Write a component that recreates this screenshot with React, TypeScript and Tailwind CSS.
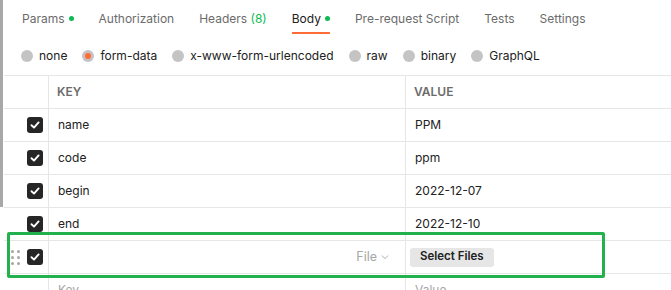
import React from "react";

const tabs = [
  { label: "Params", dot: true },
  { label: "Authorization" },
  { label: "Headers", count: "(8)" },
  { label: "Body", dot: true, active: true },
  { label: "Pre-request Script" },
  { label: "Tests" },
  { label: "Settings" },
];

const bodyTypes = ["none", "form-data", "x-www-form-urlencoded", "raw", "binary", "GraphQL"];

const rows = [
  { key: "name", value: "PPM" },
  { key: "code", value: "ppm" },
  { key: "begin", value: "2022-12-07" },
  { key: "end", value: "2022-12-10" },
];

function Check() {
  return (
    <div className="w-4 h-4 rounded-[3px] bg-[#262626] flex items-center justify-center">
      <svg width="10" height="10" viewBox="0 0 10 10">
        <path d="M1.5 5.2 L4 7.6 L8.6 2.4" fill="none" stroke="white" strokeWidth="1.9" strokeLinecap="round" strokeLinejoin="round" />
      </svg>
    </div>
  );
}

function Radio({ selected }: { selected?: boolean }) {
  return (
    <div className="w-3 h-3 rounded-full bg-[#c4c4c4] flex items-center justify-center">
      {selected && <div className="w-[6px] h-[6px] rounded-full bg-[#ff6c37]" />}
    </div>
  );
}

export default function App() {
  return (
    <div
      className="relative w-[671px] h-[290px] bg-white overflow-hidden flex text-[12px] text-[#212121]"
      style={{ fontFamily: "Inter, 'Noto Sans', sans-serif" }}
    >
      {/* scrollbar of the left pane */}
      <div className="w-[3px] shrink-0">
        <div className="h-[207px] bg-[#a8a8a8]" />
      </div>

      <div className="flex-1 ml-[1px] flex flex-col">
        {/* tabs */}
        <div className="shrink-0 flex gap-[25px] pl-[18px] text-[12px]">
          {tabs.map((t) => (
            <div
              key={t.label}
              className={
                "h-[34px] pt-[5px] flex items-center gap-[4px] border-b-2 " +
                (t.active ? "border-[#ff6c37] text-[#212121]" : "border-transparent text-[#6b6b6b]")
              }
            >
              <span>
                {t.label}
                {t.count && <span className="text-[#0cbb52]"> {t.count}</span>}
              </span>
              {t.dot && <span className="w-[5px] h-[5px] rounded-full bg-[#0cbb52]" />}
            </div>
          ))}
        </div>

        {/* body types */}
        <div className="shrink-0 h-[41px] pt-[2px] flex items-center gap-[15px] pl-[17px] text-[12px]">
          {bodyTypes.map((b) => (
            <div key={b} className="flex items-center gap-[6px]">
              <Radio selected={b === "form-data"} />
              <span>{b}</span>
            </div>
          ))}
        </div>

        {/* table */}
        <div className="shrink-0 flex flex-col">
          <div className="grid grid-cols-[45px_357px_1fr] h-[33px] border-t border-[#e6e6e6]">
            <div className="border-r border-[#e6e6e6]" />
            <div className="border-r border-[#e6e6e6] pl-2 flex items-center text-[12px] font-semibold text-[#6b6b6b]">KEY</div>
            <div className="pl-2 flex items-center text-[12px] font-semibold text-[#6b6b6b]">VALUE</div>
          </div>

          {rows.map((r) => (
            <div key={r.key} className="grid grid-cols-[45px_357px_1fr] h-[33px] border-t border-[#e6e6e6]">
              <div className="border-r border-[#e6e6e6] flex items-center justify-end pr-[5px]">
                <Check />
              </div>
              <div className="border-r border-[#e6e6e6] pl-[9px] flex items-center">{r.key}</div>
              <div className="pl-[9px] flex items-center">{r.value}</div>
            </div>
          ))}

          <div className="grid grid-cols-[45px_357px_1fr] h-[33px] border-t border-[#e6e6e6]">
            <div className="border-r border-[#e6e6e6] flex items-center justify-between pl-[7px] pr-[5px]">
              <div className="grid grid-cols-2 gap-x-[3px] gap-y-[3px]">
                {[0, 1, 2, 3, 4, 5].map((i) => (
                  <span key={i} className="w-[3px] h-[3px] rounded-full bg-[#a6a6a6]" />
                ))}
              </div>
              <Check />
            </div>
            <div className="border-r border-[#e6e6e6] flex items-center justify-end pr-[16px] text-[#a6a6a6] gap-[4px] text-[12.5px]">
              <span>File</span>
              <svg width="8" height="8" viewBox="0 0 8 8">
                <path d="M0.8 2.5 L4 5.6 L7.2 2.5" fill="none" stroke="#a6a6a6" strokeWidth="0.9" />
              </svg>
            </div>
            <div className="pl-1 flex items-center">
              <button className="h-[19px] px-[10px] rounded-[3px] bg-[#e6e6e6] text-[11.5px] font-semibold text-[#212121]">
                Select Files
              </button>
            </div>
          </div>

          <div className="grid grid-cols-[45px_357px_1fr] h-[33px] border-t border-[#e6e6e6]">
            <div className="border-r border-[#e6e6e6]" />
            <div className="border-r border-[#e6e6e6] pl-[9px] flex items-center text-[#a6a6a6]">Key</div>
            <div className="pl-[9px] flex items-center text-[#a6a6a6]">Value</div>
          </div>
        </div>
      </div>

      {/* annotation box */}
      <div className="absolute left-[7px] top-[232px] w-[598px] h-[46px] border-[3px] border-[#22b14c] rounded-[2px]" />
    </div>
  );
}
